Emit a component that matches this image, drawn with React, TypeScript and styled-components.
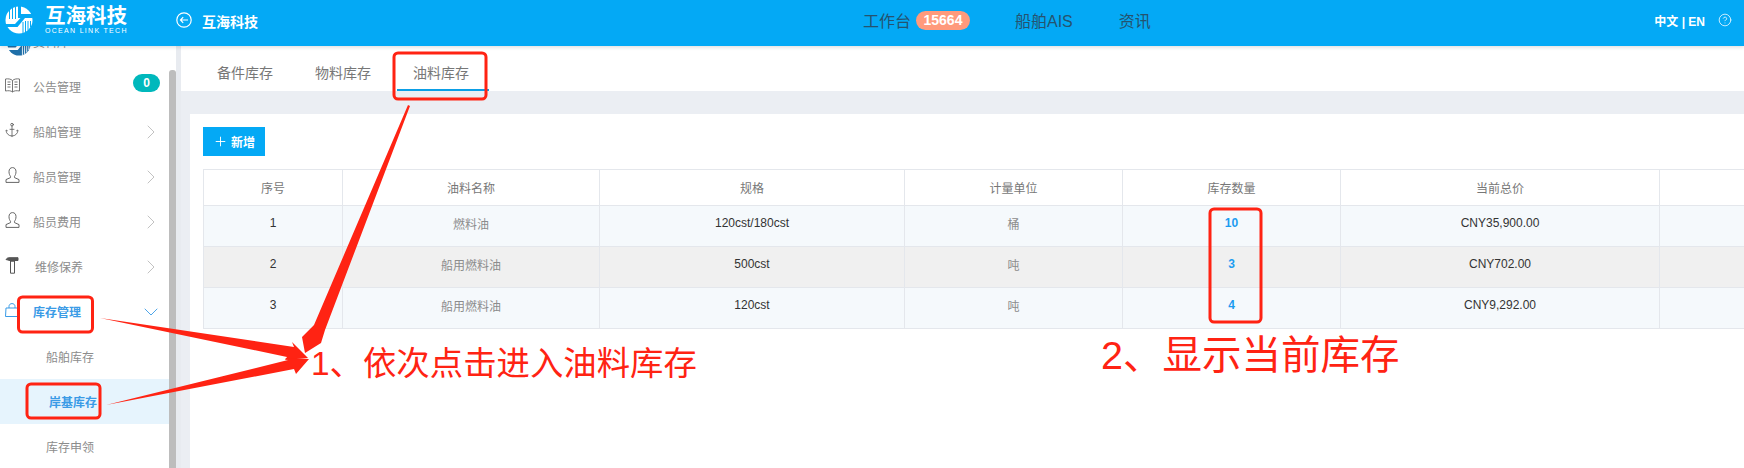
import React from 'react';
import styled, {createGlobalStyle} from 'styled-components';
import {Anchor, ChevronDown, ChevronRight, CircleHelp, Plus} from 'lucide-react';

const GlobalStyle = createGlobalStyle`
  html, body {
    margin: 0;
    padding: 0;
    background: #fff;
  }
  * {
    box-sizing: border-box;
  }
`;

const FONT = `"Liberation Sans", "Noto Sans CJK SC", sans-serif`;
const BLUE = '#04a9f5';
const RED = '#ff2313';

const Page = styled.div`
  position: relative;
  display: flex;
  flex-direction: column;
  width: 1744px;
  height: 468px;
  overflow: hidden;
  font-family: ${FONT};
  font-size: 12px;
`;

const Header = styled.header`
  position: relative;
  z-index: 2;
  flex: none;
  display: flex;
  align-items: center;
  height: 46px;
  padding: 0 12px 6px 5px;
  background: ${BLUE};
  box-shadow: 0 1px 4px rgba(0, 0, 0, .15);
`;

const LogoText = styled.div`
  margin-left: 12px;
  color: #fff;
  width: 84px;
`;

const LogoName = styled.div`
  font-size: 20.5px;
  line-height: 21px;
  font-weight: 700;
  white-space: nowrap;
`;

const LogoSub = styled.div`
  font-size: 7px;
  line-height: 9px;
  font-weight: 400;
  letter-spacing: 1.3px;
  white-space: nowrap;
`;

const BackIcon = styled.svg`
  width: 16px;
  height: 16px;
  margin-left: 47px;
  flex: none;
`;

const Title = styled.div`
  margin-left: 10px;
  font-size: 14px;
  font-weight: 700;
  color: #fff;
  padding-top: 2px;
`;

const Nav = styled.nav`
  display: flex;
  align-items: center;
  margin-left: 605px;
  font-size: 16px;
  color: #25536f;
`;

const NavItem = styled.span<{$gap: number}>`
  display: flex;
  align-items: center;
  margin-right: ${p => p.$gap}px;
`;

const Count = styled.span`
  margin-left: 5px;
  padding: 0 7.5px;
  height: 19px;
  line-height: 19px;
  border-radius: 10px;
  background: #ff9a7c;
  color: #fff;
  font-size: 14px;
  font-weight: 700;
`;

const HeaderRight = styled.div`
  display: flex;
  align-items: center;
  margin-left: auto;
  color: #fff;
  font-weight: 700;
  font-size: 12px;
  gap: 13px;
`;

const Body = styled.div`
  flex: 1;
  display: flex;
  min-height: 0;
`;

const Sidebar = styled.aside`
  flex: none;
  display: flex;
  width: 176px;
  background: #fff;
`;

const Menu = styled.div`
  flex: none;
  width: 169px;
  margin-top: -27px;
`;

const MenuItem = styled.div<{$active?: boolean}>`
  display: flex;
  align-items: center;
  height: 45px;
  padding: 0 6px 0 5px;
  color: ${p => (p.$active ? '#3a9be6' : '#8c8c8c')};
  font-weight: ${p => (p.$active ? 700 : 400)};
  svg {
    flex: none;
  }
`;

const MenuIcon = styled.span<{$hidden?: boolean}>`
  flex: none;
  display: flex;
  justify-content: center;
  width: 14px;
  margin: ${p => (p.$hidden ? '4px 7px 0 7px' : '-3px 14px 0 0')};
`;

const MenuLabel = styled.span<{$shift?: number}>`
  flex: 1;
  padding-left: ${p => p.$shift || 0}px;
`;

const SubItem = styled.div<{$active?: boolean}>`
  display: flex;
  align-items: center;
  height: 45px;
  padding-left: ${p => (p.$active ? 49 : 46)}px;
  color: ${p => (p.$active ? '#3a9be6' : '#8c8c8c')};
  background: ${p => (p.$active ? '#e6f4fd' : 'transparent')};
  font-weight: ${p => (p.$active ? 700 : 400)};
`;

const Pill = styled.span`
  width: 27px;
  height: 18px;
  margin: -8px 3px 0 0;
  border-radius: 9px;
  background: #00b8bc;
  color: #fff;
  font-weight: 700;
  text-align: center;
  line-height: 18px;
`;

const Track = styled.div`
  flex: none;
  width: 7px;
  padding-top: 24px;
`;

const Thumb = styled.div`
  height: 100%;
  background: #bdbdbd;
  border-radius: 3px 3px 0 0;
`;

const Gutter = styled.div`
  flex: none;
  width: 5px;
  background: #e8ebf0;
`;

const Main = styled.main`
  flex: 1;
  display: flex;
  flex-direction: column;
  min-width: 0;
  background: #ebeef3;
`;

const Tabs = styled.div`
  flex: none;
  display: flex;
  gap: 9px;
  height: 45px;
  padding-left: 20px;
  background: #fff;
`;

const Tab = styled.div<{$active?: boolean}>`
  height: 45px;
  padding: 16px 16px 0;
  margin-right: ${p => (p.$active ? -3 : 0)}px;
  min-width: ${p => (p.$active ? 92 : 89)}px;
  font-size: 14px;
  line-height: 22px;
  color: #777;
  border-bottom: 2px solid ${p => (p.$active ? '#0b9fe6' : 'transparent')};
`;

const Card = styled.section`
  flex: 1;
  margin: 23px 0 0 9px;
  padding: 13px 0 0 13px;
  background: #fff;
  overflow: hidden;
`;

const AddButton = styled.div`
  display: flex;
  align-items: center;
  justify-content: center;
  gap: 3px;
  width: 62px;
  height: 29px;
  background: ${BLUE};
  color: #fff;
  font-weight: 700;
`;

const Table = styled.table`
  margin-top: 13px;
  width: 1560px;
  table-layout: fixed;
  border-collapse: collapse;
  border-left: 1px solid #e4e7ec;
`;

const Th = styled.th`
  height: 36px;
  padding: 0;
  border: 1px solid #e4e7ec;
  font-weight: 400;
  color: #777;
  background: #fff;
  font-size: 12px;
`;

const Tr = styled.tr<{$even?: boolean}>`
  background: ${p => (p.$even ? '#f0f0f0' : '#f5f9fc')};
`;

const Td = styled.td<{$muted?: boolean}>`
  height: 41px;
  padding: 0 0 6px;
  border: 1px solid #e4e7ec;
  text-align: center;
  color: ${p => (p.$muted ? '#8c8c8c' : '#333')};
`;

const Stock = styled.span`
  color: #1c9cf0;
  font-weight: 700;
`;

const Overlay = styled.svg`
  position: absolute;
  left: 0;
  top: 0;
  width: 1744px;
  height: 468px;
  z-index: 3;
  pointer-events: none;
`;

const Note = styled.div<{$left: number; $top: number; $size: number}>`
  position: absolute;
  z-index: 3;
  left: ${p => p.$left}px;
  top: ${p => p.$top}px;
  font-size: ${p => p.$size}px;
  line-height: 1.2;
  color: ${RED};
  white-space: nowrap;
`;

const columns = [139, 257, 305, 218, 218, 319, 104];

const rows = [
    {id: 1, name: '燃料油', spec: '120cst/180cst', unit: '桶', stock: 10, total: 'CNY35,900.00'},
    {id: 2, name: '船用燃料油', spec: '500cst', unit: '吨', stock: 3, total: 'CNY702.00'},
    {id: 3, name: '船用燃料油', spec: '120cst', unit: '吨', stock: 4, total: 'CNY9,292.00'},
];

const Logo = ({disc, mark, size = 28}: {disc: string; mark: string; size?: number}) => (
    <svg width={size} height={size} viewBox="0 0 28 28" style={{flex: 'none'}}>
        <circle cx="14" cy="14" r="13.5" fill={disc} />
        <path d="M4.5 4 V13 M7.5 2 V13 M10.5 1 V13" stroke={mark} strokeWidth="1" />
        <path d="M13 0 H16 V8 H27 L28 12 H20 L12.5 21 H0 V18 H10 L15.5 12 H13 Z" fill={mark} />
        <path d="M18 16 V27 M20.5 15 V26 M23 15 V24 M25.5 15 V21" stroke={mark} strokeWidth="1" />
    </svg>
);

const BookIcon = () => (
    <svg width="15" height="15" viewBox="0 0 15 15" fill="none" stroke="#666" strokeWidth=".9">
        <path d="M.5 1 C3 .5 6 1 7.5 2.5 C9 1 12 .5 14.5 1 V13 C12 12.5 9 12.5 7.5 14 C6 12.5 3 12.5 .5 13 Z" />
        <path d="M7.5 2.5 V14 M2.5 4 H5.5 M2.5 6.5 H5.5 M2.5 9 H5.5 M9.5 4 H12.5 M9.5 6.5 H12.5 M9.5 9 H12.5" />
    </svg>
);

const PersonIcon = () => (
    <svg width="15" height="16" viewBox="0 0 15 16" fill="none" stroke="#666" strokeWidth="1">
        <path d="M4 4.6 C4 2 5.5 .6 7.5 .6 C9.5 .6 11 2 11 4.6 C11 7 10.2 8.4 9.5 9.3 V10.6 L14 12.6 V15.4 H1 V12.6 L5.5 10.6 V9.3 C4.8 8.4 4 7 4 4.6 Z" />
    </svg>
);

const HammerIcon = () => (
    <svg width="14" height="17" viewBox="0 0 14 17" fill="none" stroke="#555" strokeWidth="1">
        <path d="M1 2.5 C2 1 3 .7 5 .7 H13 V3.5 H10 V4 H5 V3.5 C3.5 3 2 3 1 2.5 Z" fill="#555" />
        <path d="M5.5 4 H9.5 V16.2 H5.5 Z" />
    </svg>
);

const BagIcon = () => (
    <svg width="14" height="14" viewBox="0 0 14 14" fill="none" stroke="#3a9be6" strokeWidth="1">
        <path d="M1 5 H13 L13.5 13.5 H.5 Z" />
        <path d="M4 5 V3.5 C4 1.6 5.3 .6 7 .6 C8.7 .6 10 1.6 10 3.5 V5" />
    </svg>
);

export default function App() {
    return (
        <Page>
            <GlobalStyle />
            <Header>
                <Logo disc="#fff" mark={BLUE} />
                <LogoText>
                    <LogoName>互海科技</LogoName>
                    <LogoSub>OCEAN LINK TECH</LogoSub>
                </LogoText>
                <BackIcon viewBox="0 0 16 16" fill="none" stroke="#fff" strokeWidth="1.2">
                    <circle cx="8" cy="8" r="7.2" />
                    <path d="M12 8 H4.5 M7.2 5.2 L4.5 8 L7.2 10.8" />
                </BackIcon>
                <Title>互海科技</Title>
                <Nav>
                    <NavItem $gap={45}>工作台<Count>15664</Count></NavItem>
                    <NavItem $gap={46}>船舶AIS</NavItem>
                    <NavItem $gap={0}>资讯</NavItem>
                </Nav>
                <HeaderRight>
                    <span>中文 | EN</span>
                    <CircleHelp size={14} strokeWidth={1.3} />
                </HeaderRight>
            </Header>
            <Body>
                <Sidebar>
                    <Menu>
                        <MenuItem>
                            <MenuIcon $hidden><Logo disc="#1f6fa8" mark="#fff" size={24} /></MenuIcon>
                            <MenuLabel>资料库</MenuLabel>
                        </MenuItem>
                        <MenuItem>
                            <MenuIcon><BookIcon /></MenuIcon>
                            <MenuLabel>公告管理</MenuLabel>
                            <Pill>0</Pill>
                        </MenuItem>
                        <MenuItem>
                            <MenuIcon><Anchor size={16} strokeWidth={1.2} color="#555" /></MenuIcon>
                            <MenuLabel>船舶管理</MenuLabel>
                            <ChevronRight size={24} strokeWidth={.9} color="#bbb" />
                        </MenuItem>
                        <MenuItem>
                            <MenuIcon><PersonIcon /></MenuIcon>
                            <MenuLabel>船员管理</MenuLabel>
                            <ChevronRight size={24} strokeWidth={.9} color="#bbb" />
                        </MenuItem>
                        <MenuItem>
                            <MenuIcon><PersonIcon /></MenuIcon>
                            <MenuLabel>船员费用</MenuLabel>
                            <ChevronRight size={24} strokeWidth={.9} color="#bbb" />
                        </MenuItem>
                        <MenuItem>
                            <MenuIcon><HammerIcon /></MenuIcon>
                            <MenuLabel $shift={2}>维修保养</MenuLabel>
                            <ChevronRight size={24} strokeWidth={.9} color="#bbb" />
                        </MenuItem>
                        <MenuItem $active>
                            <MenuIcon><BagIcon /></MenuIcon>
                            <MenuLabel>库存管理</MenuLabel>
                            <ChevronDown size={24} strokeWidth={.9} color="#3a9be6" />
                        </MenuItem>
                        <SubItem>船舶库存</SubItem>
                        <SubItem $active>岸基库存</SubItem>
                        <SubItem>库存申领</SubItem>
                    </Menu>
                    <Track><Thumb /></Track>
                </Sidebar>
                <Gutter />
                <Main>
                    <Tabs>
                        <Tab>备件库存</Tab>
                        <Tab>物料库存</Tab>
                        <Tab $active>油料库存</Tab>
                    </Tabs>
                    <Card>
                        <AddButton><Plus size={15} strokeWidth={1.5} />新增</AddButton>
                        <Table>
                            <colgroup>
                                {columns.map((w, i) => <col key={i} width={w} />)}
                            </colgroup>
                            <thead>
                                <tr>
                                    <Th>序号</Th>
                                    <Th>油料名称</Th>
                                    <Th>规格</Th>
                                    <Th>计量单位</Th>
                                    <Th>库存数量</Th>
                                    <Th>当前总价</Th>
                                    <Th />
                                </tr>
                            </thead>
                            <tbody>
                                {rows.map((row, i) => (
                                    <Tr key={row.id} $even={i % 2 === 1}>
                                        <Td>{row.id}</Td>
                                        <Td $muted>{row.name}</Td>
                                        <Td>{row.spec}</Td>
                                        <Td $muted>{row.unit}</Td>
                                        <Td><Stock>{row.stock}</Stock></Td>
                                        <Td>{row.total}</Td>
                                        <Td />
                                    </Tr>
                                ))}
                            </tbody>
                        </Table>
                    </Card>
                </Main>
            </Body>

            <Overlay viewBox="0 0 1744 468">
                <g fill="none" stroke={RED} strokeWidth="3">
                    <rect x="394" y="53" width="92" height="46" rx="4" />
                    <rect x="18.5" y="297" width="74" height="35" rx="4" />
                    <rect x="27" y="384" width="73" height="34" rx="4" />
                    <rect x="1210" y="209" width="51" height="113" rx="4" />
                </g>
                <g fill={RED}>
                    <polygon points="408,105 410,106 325,330 321,343 305,353 302,337 314,325" />
                    <polygon points="100,318 294,347 292,342 308,358 285,360 287,357" />
                    <polygon points="106,405 288,360 285,358 309,359 296,374 294,369" />
                </g>
            </Overlay>
            <Note $left={311} $top={344} $size={33.4}>1、依次点击进入油料库存</Note>
            <Note $left={1101} $top={332} $size={39.5}>2、显示当前库存</Note>
        </Page>
    );
}
